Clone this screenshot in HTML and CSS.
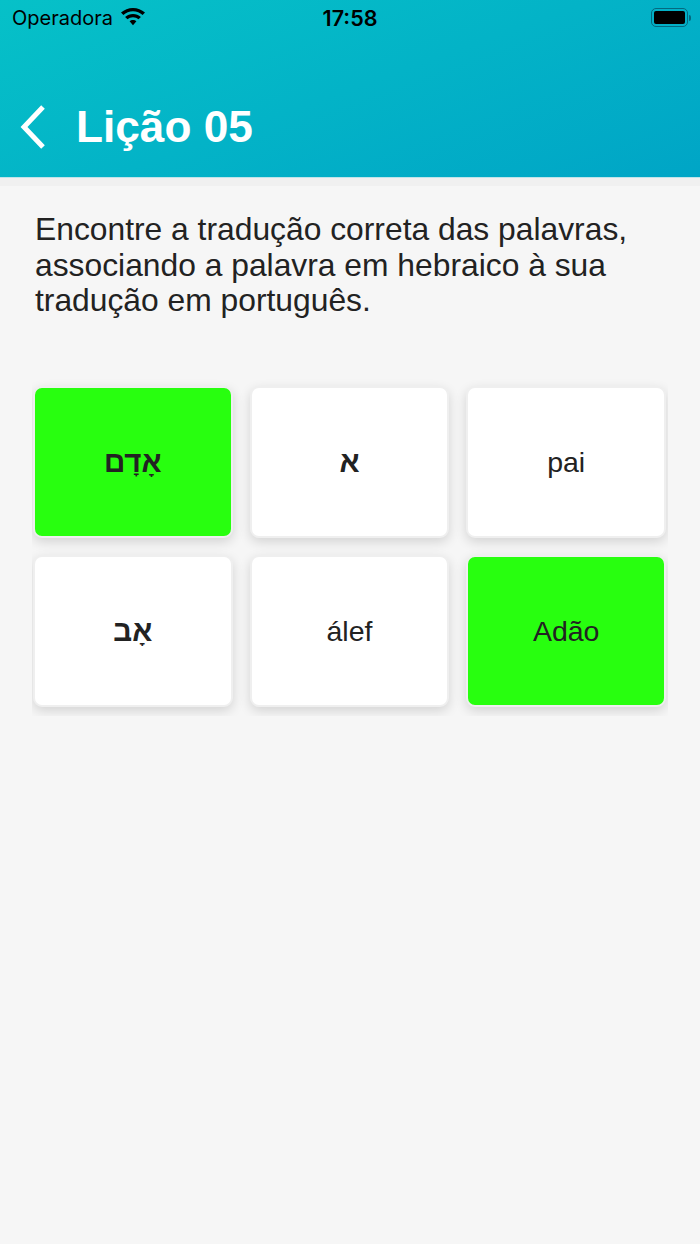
FILE: index.html
```html
<!DOCTYPE html>
<html lang="pt">
<head>
    <meta charset="UTF-8">
    <meta name="viewport" content="width=device-width, initial-scale=1.0">
    <title>Lição 05</title>
    <link rel="stylesheet" href="styles.css">
</head>
<body>
    <header class="header">
        <div class="status-bar">
            <div class="status-left">
                <span class="carrier">Operadora</span>
                <svg class="wifi" width="26" height="20" viewBox="0 0 26 20">
                    <path d="M13 3.200c3.700 0 7 1.400 9.600 3.800l2.400-2.400C21.800 1.700 17.500 0 13 0S4.200 1.700 1 4.600l2.400 2.400C6 4.600 9.300 3.200 13 3.200z"/>
                    <path d="M13 9.200c2.100 0 4 .8 5.500 2.100l2.400-2.400C18.700 7 16 5.900 13 5.900S7.300 7 5.100 8.900l2.400 2.400C9 10 10.900 9.200 13 9.200z"/>
                    <path d="M13 12c-1.300 0-2.500.5-3.400 1.300L13 17.200l3.400-3.900c-.9-.8-2.100-1.300-3.400-1.300z"/>
                </svg>
            </div>
            <span class="clock">17:58</span>
            <div class="battery">
                <div class="battery-body"><div class="battery-level"></div></div>
                <div class="battery-cap"></div>
            </div>
        </div>
        <div class="title-bar">
            <svg class="back" width="30" height="46" viewBox="0 0 30 46">
                <path d="M25 3 L6 23 L25 43" fill="none" stroke="#fff" stroke-width="5"/>
            </svg>
            <h1>Lição 05</h1>
        </div>
    </header>

    <main class="content">
        <p class="question">Encontre a tradução correta das palavras, associando a palavra em hebraico à sua tradução em português.</p>

        <div class="cards">
            <div class="card correct"><span class="hebrew" dir="rtl">אָדָם</span></div>
            <div class="card"><span class="hebrew" dir="rtl">א</span></div>
            <div class="card">pai</div>
            <div class="card"><span class="hebrew" dir="rtl">אָב</span></div>
            <div class="card">álef</div>
            <div class="card correct">Adão</div>
        </div>
    </main>
</body>
</html>
```
FILE: styles.css
```css
* {
    box-sizing: border-box;
}

html, body {
    height: 100%;
}

body {
    margin: 0;
    background: #f6f6f6;
    font-family: "Liberation Sans", Arial, sans-serif;
    color: #222;
    overflow: hidden;
}

.header {
    height: 178px;
    background: linear-gradient(160deg, #06c1c8 0%, #00a5c6 100%);
    border-bottom: 1px solid #bfe4ea;
}

.status-bar {
    height: 36px;
    padding: 0 9px 0 12px;
    display: grid;
    grid-template-columns: 1fr auto 1fr;
    align-items: center;
    color: #000;
}

.status-left {
    display: flex;
    align-items: center;
    gap: 7px;
}

.carrier {
    font-family: Inter, "Liberation Sans", sans-serif;
    font-size: 20px;
}

.wifi {
    margin-top: -1px;
}

.clock {
    font-family: Inter, "Liberation Sans", sans-serif;
    font-size: 21.500px;
    font-weight: 600;
    margin-left: -3px;
}

.battery {
    justify-self: end;
    display: flex;
    align-items: center;
    gap: 1px;
    margin-top: -1px;
}

.battery-body {
    width: 37px;
    height: 19px;
    padding: 2px;
    border: 1.500px solid #04697f;
    border-radius: 5px;
}

.battery-level {
    height: 100%;
    background: #000;
    border-radius: 2px;
}

.battery-cap {
    width: 2px;
    height: 6px;
    background: #04697f;
    border-radius: 0 2px 2px 0;
}

.title-bar {
    height: 46px;
    margin-top: 68px;
    padding-left: 18px;
    display: flex;
    align-items: center;
    gap: 28px;
}

.title-bar h1 {
    margin: 0;
    font-size: 44.200px;
    font-weight: 700;
    color: #fff;
}

.content {
    background: linear-gradient(#f0f0f0 8px, #f6f6f6 8px);
    padding: 34px 32px 0;
}

.question {
    margin: 0 3px;
    font-size: 31.800px;
    line-height: 35.500px;
    color: #222;
}

.cards {
    margin-top: 50px;
    padding: 17px 2px 9px 1px;
    display: grid;
    grid-template-columns: repeat(3, 1fr);
    grid-auto-rows: 152px;
    gap: 17px;
    overflow: hidden;
}

.card {
    display: flex;
    align-items: center;
    justify-content: center;
    padding-top: 1px;
    background: #fff;
    border: 2px solid #efefef;
    border-radius: 9px;
    box-shadow: 0 4px 12px rgba(0, 0, 0, 0.14);
    font-size: 28.500px;
    color: #222;
}

.card.correct {
    background: #28ff0f;
}

.hebrew {
    font-size: 29.500px;
    font-weight: 700;
}
```
